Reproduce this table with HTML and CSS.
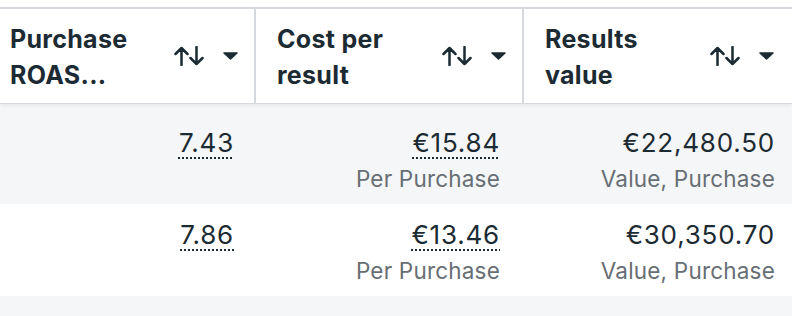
FILE: index.html
```html
<!DOCTYPE html>
<html lang="en">
<head>
    <meta charset="UTF-8">
    <title>Ads table</title>
    <link rel="stylesheet" href="styles.css">
</head>
<body>
    <div class="table">
        <!-- Header row -->
        <div class="head">
            <div class="hcell c1">
                <div class="title">Purchase<br>ROAS...</div>
                <div class="tools">
                    <svg class="sort" width="30" height="20" viewBox="0 0 30 20"><path d="M7.5 19V2M1.5 8L7.5 2l6 6M22.5 1v17M16.5 12L22.5 18l6-6"/></svg>
                    <svg class="caret" width="15" height="8" viewBox="0 0 15 8"><path d="M1 1h13L7.5 7z"/></svg>
                </div>
            </div>
            <div class="hcell c2">
                <div class="title">Cost per<br>result</div>
                <div class="tools">
                    <svg class="sort" width="30" height="20" viewBox="0 0 30 20"><path d="M7.5 19V2M1.5 8L7.5 2l6 6M22.5 1v17M16.5 12L22.5 18l6-6"/></svg>
                    <svg class="caret" width="15" height="8" viewBox="0 0 15 8"><path d="M1 1h13L7.5 7z"/></svg>
                </div>
            </div>
            <div class="hcell c3">
                <div class="title">Results<br>value</div>
                <div class="tools">
                    <svg class="sort" width="30" height="20" viewBox="0 0 30 20"><path d="M7.5 19V2M1.5 8L7.5 2l6 6M22.5 1v17M16.5 12L22.5 18l6-6"/></svg>
                    <svg class="caret" width="15" height="8" viewBox="0 0 15 8"><path d="M1 1h13L7.5 7z"/></svg>
                </div>
            </div>
        </div>

        <!-- Data rows -->
        <div class="rows">
            <div class="row shade">
                <div class="cell c1"><span class="value dotted">7.43</span></div>
                <div class="cell c2"><span class="value dotted">€15.84</span><span class="sub">Per Purchase</span></div>
                <div class="cell c3"><span class="value">€22,480.50</span><span class="sub">Value, Purchase</span></div>
            </div>
            <div class="row">
                <div class="cell c1"><span class="value dotted">7.86</span></div>
                <div class="cell c2"><span class="value dotted">€13.46</span><span class="sub">Per Purchase</span></div>
                <div class="cell c3"><span class="value">€30,350.70</span><span class="sub">Value, Purchase</span></div>
            </div>
            <div class="row shade filler"></div>
        </div>
    </div>
</body>
</html>
```

FILE: styles.css
```css
body {
    margin: 0;
    background-color: #ffffff;
    font-family: Inter, "Noto Sans", sans-serif;
    color: #1c2b33;
    overflow: hidden;
}
.table {
    margin-top: 7px;
    width: 792px;
}
.head {
    display: grid;
    grid-template-columns: 256px 268px 268px;
    border-top: 2px solid #d5d8dc;
    border-bottom: 1px solid #d5d8dc;
    background-color: #ffffff;
    box-shadow: 0 2px 4px rgba(0, 0, 0, 0.06);
    position: relative;
    z-index: 1;
}
.hcell {
    height: 94px;
    display: flex;
    align-items: center;
    justify-content: space-between;
    border-right: 2px solid #d5d8dc;
    padding-right: 16px;
}
.hcell.c3 {
    border-right: none;
    padding-right: 18px;
}
.hcell.c1 {
    padding-left: 10px;
}
.hcell.c2, .hcell.c3 {
    padding-left: 21px;
}
.title {
    font-size: 25px;
    font-weight: 700;
    line-height: 36px;
    letter-spacing: 0.3px;
    margin-top: 1px;
}
.tools {
    display: flex;
    align-items: center;
    gap: 19px;
    margin-top: -1px;
}
.sort path {
    fill: none;
    stroke: #1c2b33;
    stroke-width: 2.5;
    stroke-linecap: round;
    stroke-linejoin: round;
}
.caret path {
    fill: #1c2b33;
    stroke: #1c2b33;
    stroke-width: 1.5;
    stroke-linejoin: round;
}
.rows {
    background-color: #f5f6f7;
    padding-top: 8px;
}
.row {
    display: grid;
    grid-template-columns: 256px 268px 268px;
    height: 92px;
    background-color: #ffffff;
}
.row.shade {
    background-color: #f5f6f7;
}
.row.filler {
    height: 20px;
}
.cell {
    display: flex;
    flex-direction: column;
    align-items: flex-end;
    padding-top: 13px;
}
.cell.c1 {
    padding-right: 22px;
}
.cell.c2 {
    padding-right: 24px;
}
.cell.c3 {
    padding-right: 17px;
}
.value {
    font-size: 26px;
    line-height: 36px;
    letter-spacing: 0.8px;
}
.dotted {
    text-decoration: underline dotted #1c2b33;
    text-decoration-thickness: 2px;
    text-underline-offset: 5px;
}
.sub {
    font-size: 22.5px;
    line-height: 36px;
    letter-spacing: 0.2px;
    color: #676e74;
}
```
